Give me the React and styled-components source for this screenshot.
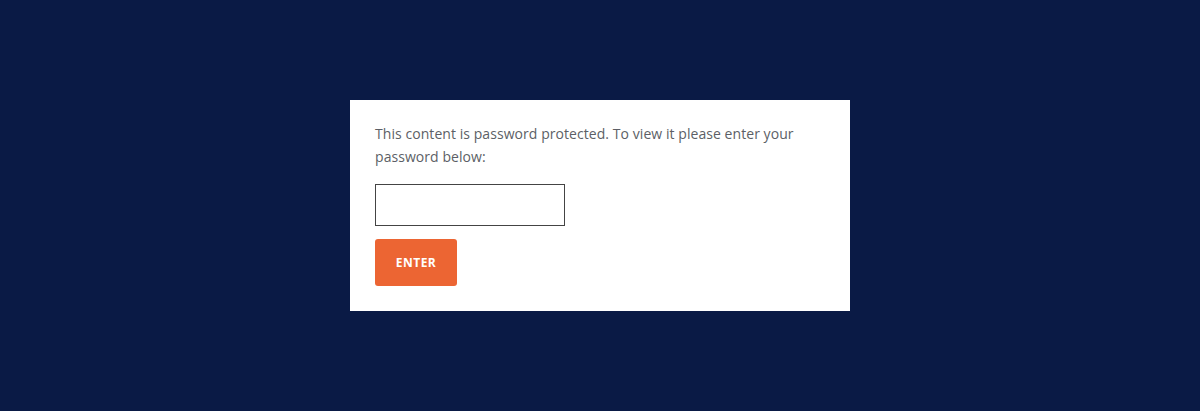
import { createGlobalStyle, styled } from 'styled-components'

const Global = createGlobalStyle`
  html, body {
    margin: 0;
    padding: 0;
    background: #0a1a45;
  }
  * { box-sizing: border-box; }
`

const Page = styled.div`
  min-height: 100vh;
  display: flex;
  align-items: center;
  justify-content: center;
`

const Card = styled.form`
  width: 500px;
  background: #ffffff;
  padding: 22px 25px 25px;
  display: flex;
  flex-direction: column;
  align-items: flex-start;
`

const Message = styled.p`
  margin: 0 0 16px;
  font-family: "Open Sans", "Liberation Sans", sans-serif;
  font-size: 14px;
  letter-spacing: 0.06px;
  line-height: 23px;
  color: #5c5f66;
`

const PasswordInput = styled.input`
  width: 190px;
  height: 42px;
  margin-bottom: 13px;
  border: 1px solid #444;
  border-radius: 0;
  background: #fff;
  outline: none;
  padding: 0 10px;
`

const EnterButton = styled.button`
  width: 82px;
  height: 47px;
  border: none;
  border-radius: 3px;
  background: #ec6533;
  color: #fff;
  font-family: "Open Sans", "Liberation Sans", sans-serif;
  font-weight: 700;
  font-size: 12px;
  letter-spacing: 0.5px;
  text-transform: uppercase;
  cursor: pointer;
`

export default function App() {
  return <>
    <Global />
    <Page>
      <Card onSubmit={e => e.preventDefault()}>
        <Message>
          This content is password protected. To view it please enter your password below:
        </Message>
        <PasswordInput type="password" aria-label="Password" />
        <EnterButton type="submit">Enter</EnterButton>
      </Card>
    </Page>
  </>
}
